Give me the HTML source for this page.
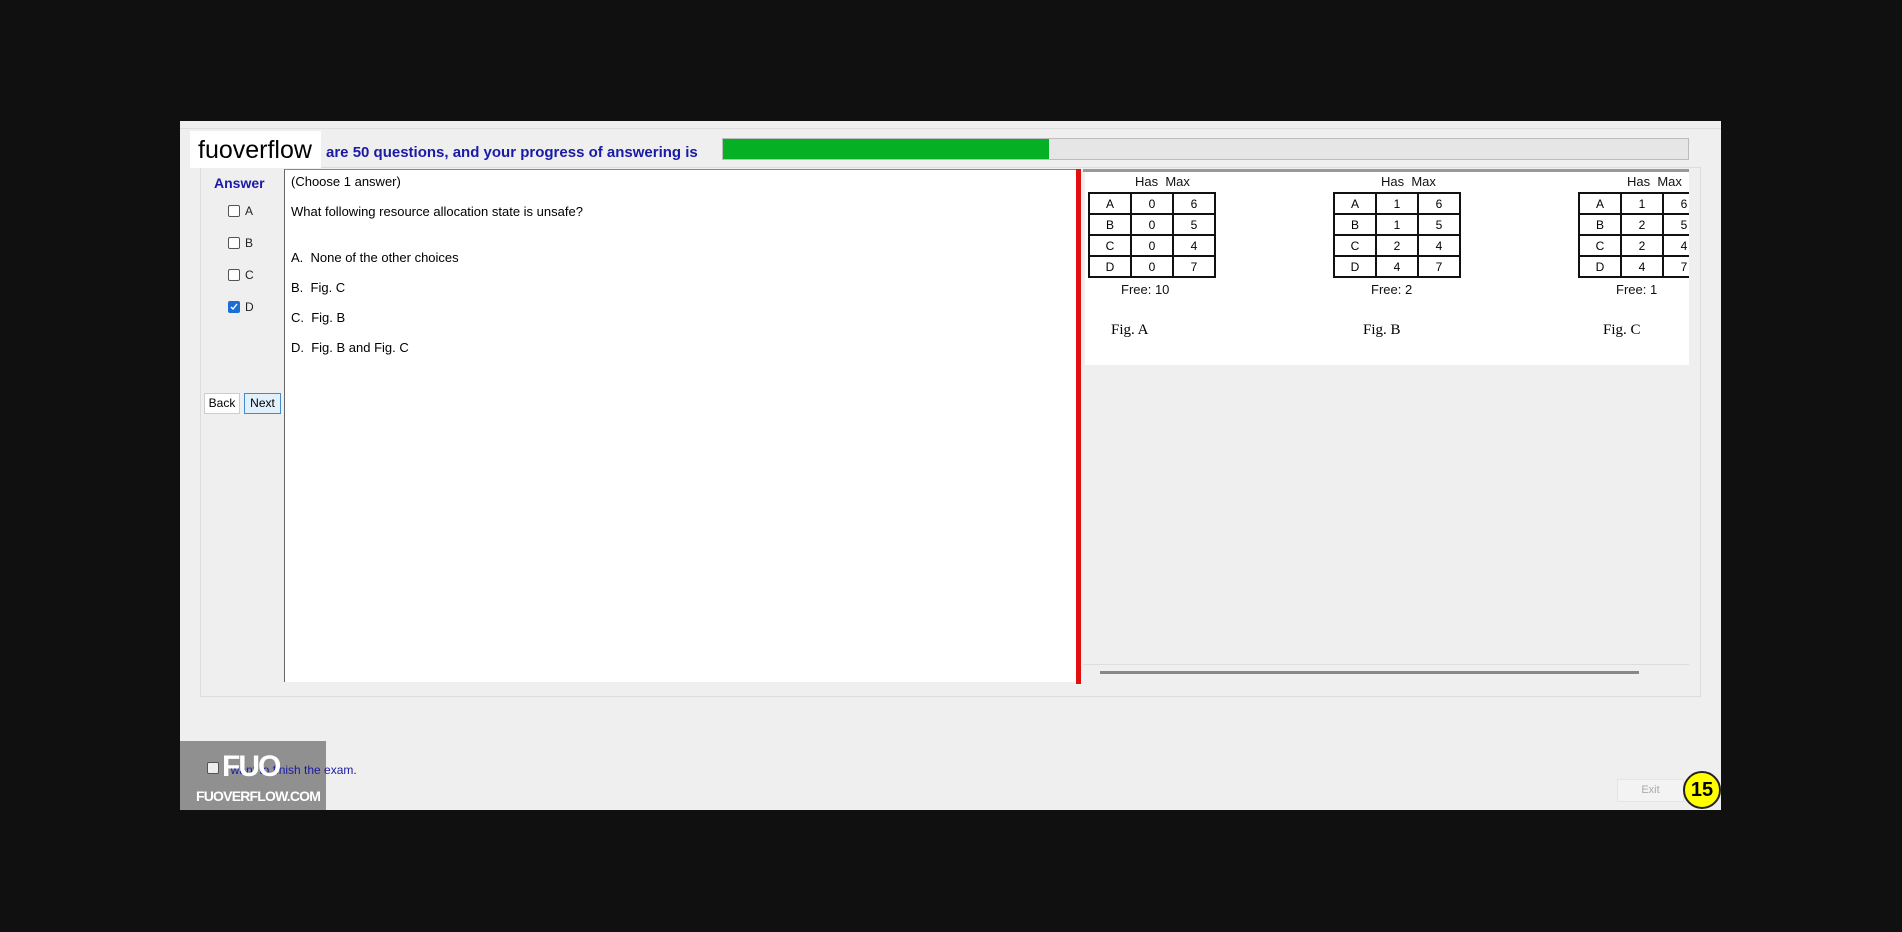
<!DOCTYPE html>
<html><head><meta charset="utf-8"><style>
*{margin:0;padding:0;box-sizing:border-box}
body{width:1902px;height:932px;background:#101010;position:relative;overflow:hidden;font-family:"Liberation Sans",Arial,sans-serif}
.a{position:absolute}
.win{left:180px;top:121px;width:1541px;height:689px;background:#efefef}
.q{font-size:13px;color:#000;white-space:nowrap}
.cb{width:12px;height:12px;border:1px solid #555;border-radius:2px;background:#fff}
.lbl{font-size:12px;color:#222}
table{border-collapse:collapse;position:absolute;font-size:12px;font-family:"Liberation Sans",sans-serif;width:128px;table-layout:fixed}
td{border:2px solid #111;width:42px;height:21px;text-align:center;padding:0}
.h{font-size:13px;font-family:"Liberation Sans",sans-serif;color:#111;white-space:nowrap}
.fig{font-family:"Liberation Serif",serif;font-size:15px;color:#000}
</style></head><body>
<div class="a win"></div>
<div class="a" style="left:180px;top:121px;width:1541px;height:8px;border-bottom:1px solid #ddd"></div>
<div class="a" style="left:200px;top:167px;width:1501px;height:530px;border:1px solid #dcdcdc"></div>
<div class="a" style="left:190px;top:131px;width:131px;height:37px;background:#fff"></div>
<div class="a" style="left:198px;top:136px;font-size:25px;color:#000">fuoverflow</div>
<div class="a" style="left:326px;top:144px;font-size:15px;font-weight:bold;color:#1a1aa6;white-space:nowrap">are 50 questions, and your progress of answering is</div>
<div class="a" style="left:722px;top:138px;width:967px;height:22px;background:#e6e6e6;border:1px solid #bcbcbc"></div>
<div class="a" style="left:723px;top:139px;width:326px;height:20px;background:#06b025"></div>

<div class="a" style="left:214px;top:175px;font-size:14px;font-weight:bold;color:#1a1aa6">Answer</div>
<div class="a cb" style="left:228px;top:205px"></div><div class="a lbl" style="left:245px;top:204px">A</div>
<div class="a cb" style="left:228px;top:237px"></div><div class="a lbl" style="left:245px;top:236px">B</div>
<div class="a cb" style="left:228px;top:269px"></div><div class="a lbl" style="left:245px;top:268px">C</div>
<div class="a cb" style="left:228px;top:301px;background:#1a6fd0;border-color:#1a6fd0"><svg width="10" height="10" style="position:absolute;left:0;top:0"><path d="M2 5 L4 7 L8 2" stroke="#fff" stroke-width="1.4" fill="none"/></svg></div><div class="a lbl" style="left:245px;top:300px">D</div>
<div class="a" style="left:204px;top:393px;width:36px;height:21px;background:#fff;border:1px solid #ccc;font-size:12px;text-align:center;line-height:19px">Back</div>
<div class="a" style="left:244px;top:393px;width:37px;height:21px;background:#e1f0fb;border:1px solid #3c8cd0;font-size:12px;text-align:center;line-height:19px">Next</div>

<div class="a" style="left:284px;top:169px;width:793px;height:513px;background:#fff;border-left:1px solid #666;border-top:1px solid #888"></div>
<div class="a q" style="left:291px;top:174px">(Choose 1 answer)</div>
<div class="a q" style="left:291px;top:204px">What following resource allocation state is unsafe?</div>
<div class="a q" style="left:291px;top:250px">A.&nbsp; None of the other choices</div>
<div class="a q" style="left:291px;top:280px">B.&nbsp; Fig. C</div>
<div class="a q" style="left:291px;top:310px">C.&nbsp; Fig. B</div>
<div class="a q" style="left:291px;top:340px">D.&nbsp; Fig. B and Fig. C</div>
<div class="a" style="left:1076px;top:169px;width:5px;height:515px;background:#e01010"></div>

<div class="a" style="left:1083px;top:169px;width:606px;height:3px;background:#999"></div>
<div class="a" style="left:1085px;top:172px;width:604px;height:193px;background:#fff;overflow:hidden">
 <div class="a h" style="left:50px;top:2px">Has&nbsp; Max</div>
 <table style="left:3px;top:20px"><tr><td>A</td><td>0</td><td>6</td></tr><tr><td>B</td><td>0</td><td>5</td></tr><tr><td>C</td><td>0</td><td>4</td></tr><tr><td>D</td><td>0</td><td>7</td></tr></table>
 <div class="a h" style="left:36px;top:110px">Free: 10</div>
 <div class="a fig" style="left:26px;top:150px">Fig. A</div>
 <div class="a h" style="left:296px;top:2px">Has&nbsp; Max</div>
 <table style="left:248px;top:20px"><tr><td>A</td><td>1</td><td>6</td></tr><tr><td>B</td><td>1</td><td>5</td></tr><tr><td>C</td><td>2</td><td>4</td></tr><tr><td>D</td><td>4</td><td>7</td></tr></table>
 <div class="a h" style="left:286px;top:110px">Free: 2</div>
 <div class="a fig" style="left:278px;top:150px">Fig. B</div>
 <div class="a h" style="left:542px;top:2px">Has&nbsp; Max</div>
 <table style="left:493px;top:20px"><tr><td>A</td><td>1</td><td>6</td></tr><tr><td>B</td><td>2</td><td>5</td></tr><tr><td>C</td><td>2</td><td>4</td></tr><tr><td>D</td><td>4</td><td>7</td></tr></table>
 <div class="a h" style="left:531px;top:110px">Free: 1</div>
 <div class="a fig" style="left:518px;top:150px">Fig. C</div>
</div>
<div class="a" style="left:1083px;top:365px;width:606px;height:300px;background:#efefef"></div>
<div class="a" style="left:1083px;top:664px;width:606px;height:18px;border-top:1px solid #ddd"></div>
<div class="a" style="left:1100px;top:671px;width:539px;height:3px;background:#888"></div>

<div class="a" style="left:180px;top:741px;width:146px;height:69px;background:#909090"></div>
<div class="a cb" style="left:207px;top:762px;background:#eee"></div>
<div class="a" style="left:224px;top:763px;font-size:12px;color:#1a1aa6">I want to finish the exam.</div>
<div class="a" style="left:222px;top:750px;font-size:30px;font-weight:bold;color:#fff;letter-spacing:-2px">FUO</div>
<div class="a" style="left:196px;top:788px;font-size:14px;font-weight:bold;color:#fff;letter-spacing:-0.8px">FUOVERFLOW.COM</div>
<div class="a" style="left:1617px;top:779px;width:67px;height:23px;background:#f3f3f3;border:1px solid #e4e4e4;font-size:11px;color:#aaa;text-align:center;line-height:21px">Exit</div>
<div class="a" style="left:1683px;top:771px;width:38px;height:38px;border-radius:50%;background:#ffff00;border:2px solid #222;font-size:20px;font-weight:bold;text-align:center;line-height:34px">15</div>
</body></html>
